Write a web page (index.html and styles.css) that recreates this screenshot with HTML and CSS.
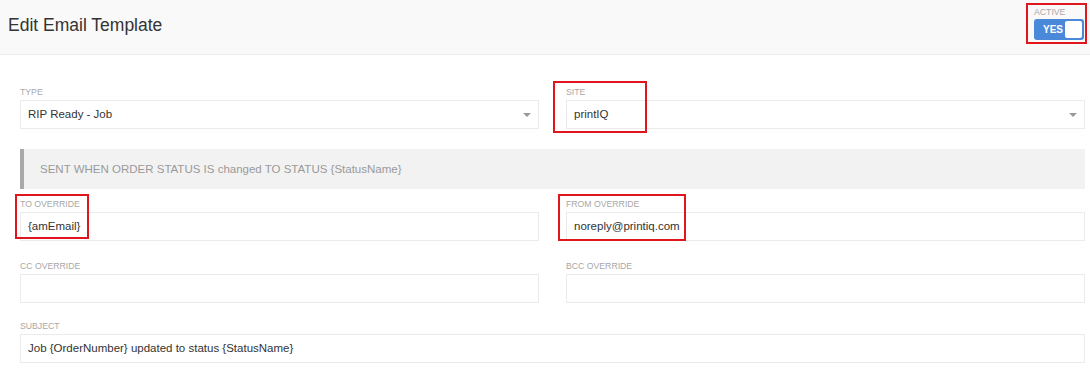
FILE: index.html
```html
<!DOCTYPE html>
<html>
<head>
<meta charset="utf-8">
<link rel="stylesheet" href="styles.css">
</head>
<body>
<div class="page">
  <header class="header">
    <h1 class="title">Edit Email Template</h1>
    <div class="active">
      <div class="label">ACTIVE</div>
      <div class="switch"><span class="switch-text">YES</span><span class="knob"></span></div>
    </div>
  </header>
  <main class="form">
    <div class="row">
      <div class="field">
        <div class="label">TYPE</div>
        <div class="box select"><span>RIP Ready - Job</span><span class="caret"></span></div>
      </div>
      <div class="field">
        <div class="label">SITE</div>
        <div class="box select"><span>printIQ</span><span class="caret"></span></div>
      </div>
    </div>
    <div class="note">SENT WHEN ORDER STATUS IS changed TO STATUS {StatusName}</div>
    <div class="row">
      <div class="field">
        <div class="label">TO OVERRIDE</div>
        <div class="box">{amEmail}</div>
      </div>
      <div class="field">
        <div class="label">FROM OVERRIDE</div>
        <div class="box">noreply@printiq.com</div>
      </div>
    </div>
    <div class="row spaced">
      <div class="field">
        <div class="label">CC OVERRIDE</div>
        <div class="box"></div>
      </div>
      <div class="field">
        <div class="label">BCC OVERRIDE</div>
        <div class="box"></div>
      </div>
    </div>
    <div class="row spaced last single">
      <div class="field">
        <div class="label">SUBJECT</div>
        <div class="box">Job {OrderNumber} updated to status {StatusName}</div>
      </div>
    </div>
  </main>
  <div class="mark mark-active"></div>
  <div class="mark mark-site"></div>
  <div class="mark mark-to"></div>
  <div class="mark mark-from"></div>
</div>
</body>
</html>
```
FILE: styles.css
```css
* { box-sizing: border-box; }
html, body { margin: 0; padding: 0; background: #fff; }
body { font-family: "Liberation Sans", Arial, sans-serif; color: #333; }
.page { position: relative; width: 1090px; height: 370px; overflow: hidden; }

.header {
  height: 55px;
  background: #f9f9f9;
  border-bottom: 1px solid #ececec;
  display: flex;
  justify-content: space-between;
  align-items: flex-start;
  padding: 0 6px 0 8px;
}
.title {
  margin: 15px 0 0 0;
  font-size: 17.5px;
  font-weight: normal;
  line-height: 20px;
  color: #333;
}
.active { padding-top: 7px; }
.active .label { margin-bottom: 1px; }
.switch {
  width: 50px;
  height: 21px;
  background: #4a88da;
  border-radius: 3px;
  display: flex;
  align-items: center;
  justify-content: space-between;
  padding: 0 2px 0 9px;
}
.switch-text { color: #fff; font-weight: bold; font-size: 10px; }
.knob { width: 17px; height: 17px; background: #fff; border-radius: 2px; }

.label {
  font-size: 8.7px;
  line-height: 11px;
  color: #a8a8a8;
  text-transform: uppercase;
}

.form { padding: 32px 5px 0 20px; }
.row { display: grid; grid-template-columns: 1fr 1fr; column-gap: 27px; }
.row.single { grid-template-columns: 1fr; }
.row.spaced { margin-top: 20px; }
.row.spaced.last { margin-top: 18px; }
.field .label { margin-bottom: 2px; }
.box {
  height: 29px;
  border: 1px solid #ebebeb;
  background: #fff;
  font-size: 11.5px;
  line-height: 27px;
  padding: 0 7px;
  color: #333;
}
.select { display: flex; justify-content: space-between; align-items: center; }
.caret {
  width: 0; height: 0;
  border-left: 4px solid transparent;
  border-right: 4px solid transparent;
  border-top: 4px solid #999;
  margin-right: 0;
}
.note {
  margin: 20px 0 10px 0;
  height: 40px;
  background: #f2f2f2;
  border-left: 4px solid #a9a9a9;
  padding-left: 16px;
  font-size: 11.5px;
  line-height: 40px;
  color: #9a9a9a;
}

.mark { position: absolute; border: 2px solid #e0161f; }
.mark-active { left: 1026px; top: 3px; width: 61px; height: 41px; }
.mark-site { left: 553px; top: 81px; width: 94px; height: 52px; }
.mark-to { left: 15px; top: 194px; width: 74px; height: 45px; }
.mark-from { left: 558px; top: 194px; width: 128px; height: 47px; }
```
